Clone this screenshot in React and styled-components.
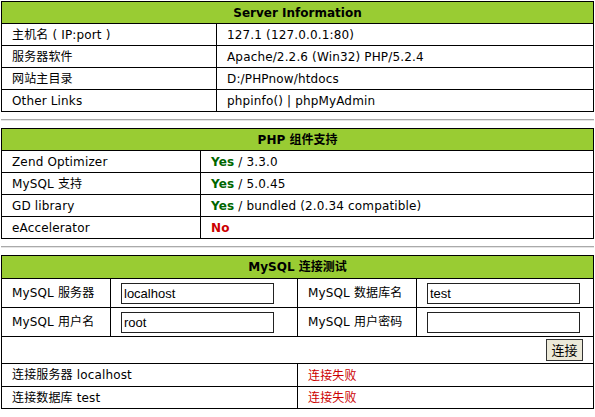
import React from 'react'
import styled, { createGlobalStyle } from 'styled-components'

const GlobalStyle = createGlobalStyle`
  html, body {
    margin: 0;
    padding: 0;
    background: #fff;
  }
  body {
    font-family: "DejaVu Sans", Verdana, "Noto Sans CJK SC", sans-serif;
    font-size: 12px;
    color: #000;
  }
`

const Page = styled.div`
  padding: 1px 1px 0 1px;
  width: 593px;
`

const Table = styled.table`
  width: 100%;
  border-collapse: collapse;
  border: 1px solid #000;
  table-layout: fixed;
`

const HeadCell = styled.th`
  background: #99cc33;
  border: 1px solid #000;
  height: ${p => p.$h || 21}px;
  padding: 0;
  font-weight: bold;
  font-size: 12px;
  line-height: 14px;
  text-align: center;
`

const Cell = styled.td`
  border: 1px solid #000;
  height: ${p => p.$h || 21}px;
  padding: 0 10px;
  line-height: 14px;
  white-space: nowrap;
  letter-spacing: 0.15px;
  text-align: ${p => p.$align || 'left'};
`

const Yes = styled.b`
  color: #006600;
`

const No = styled.b`
  color: #cc0000;
`

const Fail = styled.span`
  color: #cc0000;
  font-family: "Noto Sans CJK SC", sans-serif;
`

const Rule = styled.hr`
  margin: 7px 0;
  border: 0;
  border-top: 1px solid #aaa;
  border-bottom: 1px solid #e4e4e4;
  height: 0;
`

const TextInput = styled.input`
  box-sizing: border-box;
  width: 153px;
  height: 21px;
  border: 1px solid #222;
  padding: 0 2px;
  font-family: "Liberation Sans", Arial, sans-serif;
  font-size: 13px;
  letter-spacing: 0;
  color: #000;
  outline: none;
  vertical-align: middle;
`

const Button = styled.button`
  box-sizing: border-box;
  width: 37px;
  height: 22px;
  background: #ece9d8;
  border: 1px solid #333;
  padding: 0;
  font-family: "Noto Sans CJK SC", sans-serif;
  font-size: 13px;
  line-height: 18px;
  color: #000;
  vertical-align: middle;
`

const serverRows = [
  ['主机名 ( IP:port )', '127.1 (127.0.0.1:80)'],
  ['服务器软件', 'Apache/2.2.6 (Win32) PHP/5.2.4'],
  ['网站主目录', 'D:/PHPnow/htdocs'],
  ['Other Links', 'phpinfo() | phpMyAdmin'],
]

const phpRows = [
  ['Zend Optimizer', true, '3.3.0'],
  ['MySQL 支持', true, '5.0.45'],
  ['GD library', true, 'bundled (2.0.34 compatible)'],
  ['eAccelerator', false, ''],
]

export default function App() {
  return (
    <>
      <GlobalStyle />
      <Page>
        <Table>
          <colgroup>
            <col style={{ width: 215 }} />
            <col />
          </colgroup>
          <thead>
            <tr>
              <HeadCell colSpan={2}>Server Information</HeadCell>
            </tr>
          </thead>
          <tbody>
            {serverRows.map(([k, v]) => (
              <tr key={k}>
                <Cell>{k}</Cell>
                <Cell>{v}</Cell>
              </tr>
            ))}
          </tbody>
        </Table>

        <Rule />

        <Table>
          <colgroup>
            <col style={{ width: 199 }} />
            <col />
          </colgroup>
          <thead>
            <tr>
              <HeadCell colSpan={2}>PHP 组件支持</HeadCell>
            </tr>
          </thead>
          <tbody>
            {phpRows.map(([k, ok, v]) => (
              <tr key={k}>
                <Cell>{k}</Cell>
                <Cell>
                  {ok ? (
                    <>
                      <Yes>Yes</Yes> / {v}
                    </>
                  ) : (
                    <No>No</No>
                  )}
                </Cell>
              </tr>
            ))}
          </tbody>
        </Table>

        <Rule />

        <Table>
          <colgroup>
            <col style={{ width: 109 }} />
            <col style={{ width: 187 }} />
            <col style={{ width: 119 }} />
            <col />
          </colgroup>
          <thead>
            <tr>
              <HeadCell colSpan={4} $h={22}>MySQL 连接测试</HeadCell>
            </tr>
          </thead>
          <tbody>
            <tr>
              <Cell $h={28}>MySQL 服务器</Cell>
              <Cell $h={28}><TextInput defaultValue="localhost" /></Cell>
              <Cell $h={28}>MySQL 数据库名</Cell>
              <Cell $h={28}><TextInput defaultValue="test" /></Cell>
            </tr>
            <tr>
              <Cell $h={28}>MySQL 用户名</Cell>
              <Cell $h={28}><TextInput defaultValue="root" /></Cell>
              <Cell $h={28}>MySQL 用户密码</Cell>
              <Cell $h={28}><TextInput type="password" /></Cell>
            </tr>
            <tr>
              <Cell colSpan={4} $h={26} $align="right">
                <Button>连接</Button>
              </Cell>
            </tr>
            <tr>
              <Cell colSpan={2} $h={22}>连接服务器 localhost</Cell>
              <Cell colSpan={2} $h={22}><Fail>连接失败</Fail></Cell>
            </tr>
            <tr>
              <Cell colSpan={2} $h={21}>连接数据库 test</Cell>
              <Cell colSpan={2} $h={21}><Fail>连接失败</Fail></Cell>
            </tr>
          </tbody>
        </Table>
      </Page>
    </>
  )
}
